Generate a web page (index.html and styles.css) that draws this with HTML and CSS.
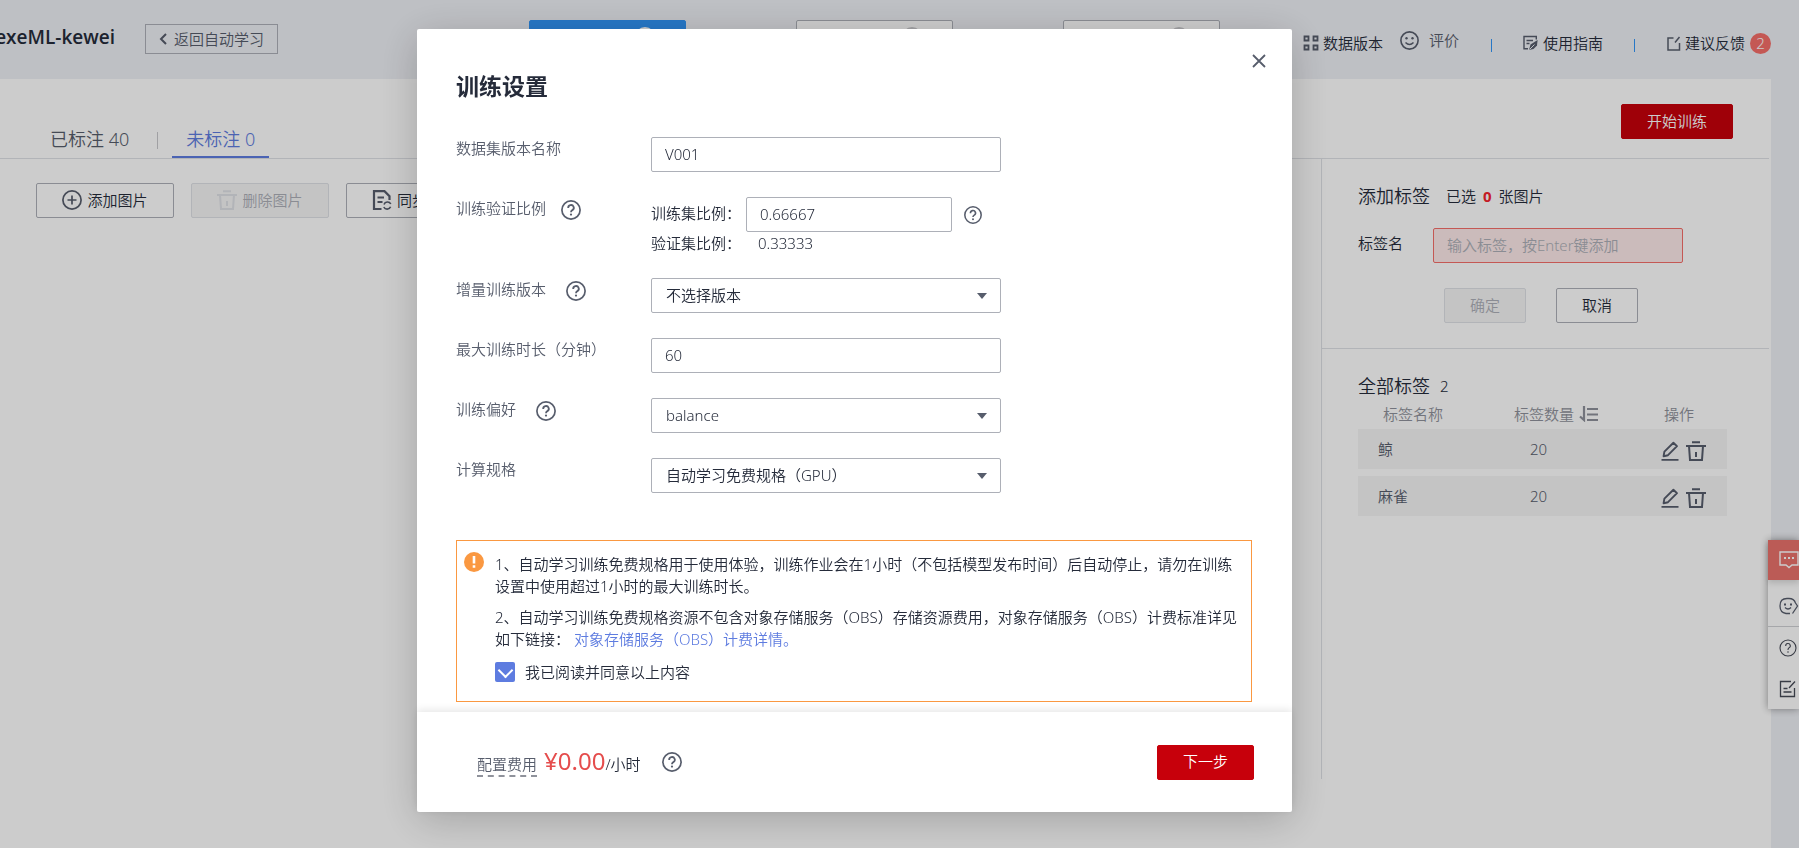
FILE: index.html
```html
<!DOCTYPE html>
<html lang="zh-CN">
<head>
<meta charset="utf-8">
<title>exeML-kewei</title>
<link rel="stylesheet" href="styles.css">
</head>
<body>
<svg class="defs" aria-hidden="true">
  <symbol id="help" viewBox="0 0 20 20">
    <circle cx="10" cy="10" r="9.1" fill="none" stroke="currentColor" stroke-width="1.7"/>
    <path d="M7.2 8A2.8 2.7 0 1 1 11.4 10.1C10.3 10.8 10 11.1 10 12.2" fill="none" stroke="currentColor" stroke-width="1.8"/>
    <circle cx="10" cy="14.6" r="1.1" fill="currentColor"/>
  </symbol>
  <symbol id="trash" viewBox="0 0 20 20">
    <path d="M6 1.2h8M0 5h20M3 5l1 14h12l1-14M10 11v5" fill="none" stroke="currentColor" stroke-width="2"/>
  </symbol>
  <symbol id="pencil" viewBox="0 0 18 20">
    <path d="M2.6 15.2L3.4 10.6L12.4 1.8L16 5.2L7 14.2Z M0.5 18.9h17" fill="none" stroke="currentColor" stroke-width="1.9" stroke-linejoin="round"/>
  </symbol>
</svg>

<header class="topbar">
  <h1 class="project">exeML-kewei</h1>
  <button class="back" type="button">
    <svg width="8" height="12" viewBox="0 0 8 12"><path d="M7 1L2 6l5 5" fill="none" stroke="currentColor" stroke-width="2"/></svg>返回自动学习
  </button>
  <div class="steps">
    <div class="step step-on"><span class="step-dot"></span></div>
    <div class="step"><span class="step-dot"></span></div>
    <div class="step"><span class="step-dot"></span></div>
  </div>
  <nav class="links">
    <a class="link" href="#versions">
      <svg width="16" height="16" viewBox="0 0 16 16"><path d="M1.5 1.5h4v4h-4zM10.5 1.5h4v4h-4zM1.5 10.5h4v4h-4zM10.5 10.5h4v4h-4z" fill="none" stroke="#575d6c" stroke-width="1.8"/></svg>数据版本
    </a>
    <a class="link rate" href="#rate">
      <svg width="19" height="19" viewBox="0 0 19 19"><circle cx="9.5" cy="9.5" r="8.6" fill="none" stroke="#575d6c" stroke-width="1.6"/><circle cx="6.5" cy="7.2" r="1.2" fill="#575d6c"/><circle cx="12.5" cy="7.2" r="1.2" fill="#575d6c"/><path d="M5.5 11.5Q9.5 15.5 13.5 11.5" fill="none" stroke="#575d6c" stroke-width="1.5"/></svg>评价
    </a>
    <span class="bar"></span>
    <a class="link guide" href="#guide">
      <svg width="15" height="16" viewBox="0 0 15 16" fill="none" stroke="#575d6c" stroke-width="1.4"><path d="M13.3 4.5V1.5H1v12.3h4M3.5 5.5h6.5M3.5 8.5h3"/><path d="M6 15L7.5 9.5L14.6 5L14 10.5L10.5 14Z" fill="#575d6c" stroke="none"/><path d="M6.5 14.5L11.5 9.5" stroke="#eef0f5" stroke-width="1"/></svg>使用指南
    </a>
    <span class="bar"></span>
    <a class="link feedback" href="#feedback">
      <svg width="14" height="15" viewBox="0 0 14 15" fill="none" stroke="#575d6c" stroke-width="1.5"><path d="M6.5 2H1v12h11.5V7M8 6.5L12.5 1"/></svg>建议反馈<span class="badge">2</span>
    </a>
  </nav>
</header>

<main class="panel">
  <div class="panel-head">
    <div class="tabs">
      <button class="tab" type="button">已标注 40</button>
      <span class="tab-sep"></span>
      <button class="tab tab-on" type="button">未标注 0</button>
    </div>
    <button class="btn primary start" type="button">开始训练</button>
  </div>
  <div class="panel-body">
    <div class="tools">
      <button class="btn tool" type="button">
        <svg width="20" height="20" viewBox="0 0 20 20" fill="none" stroke="#575d6c" stroke-width="1.7"><circle cx="10" cy="10" r="9.1"/><path d="M10 5.5v9M5.5 10h9"/></svg>添加图片
      </button>
      <button class="btn tool" type="button" disabled>
        <svg width="20" height="20"><use href="#trash"/></svg>删除图片
      </button>
      <button class="btn tool sync" type="button">
        <svg width="20" height="20" viewBox="0 0 20 20" fill="none" stroke="#575d6c" stroke-width="2.2"><path d="M9.5 19H2V1.2h10.5l5 5V10M5.5 7.5h6.5M5.5 12h5"/><path d="M18.8 14A3.7 3.7 0 0 0 12 14.5M11.8 17A3.7 3.7 0 0 0 18.6 16.8" stroke-width="1.6"/></svg>同步
      </button>
    </div>
    <aside class="side">
      <section class="add">
        <div class="add-title"><h2>添加标签</h2><span>已选 <b>0</b> 张图片</span></div>
        <div class="add-row">
          <label for="tag">标签名</label>
          <input id="tag" class="field tag" type="text" placeholder="输入标签，按Enter键添加">
        </div>
        <div class="add-actions">
          <button class="btn" type="button" disabled>确定</button>
          <button class="btn" type="button">取消</button>
        </div>
      </section>
      <section class="all">
        <div class="add-title"><h2>全部标签</h2><span class="count">2</span></div>
        <table class="tags">
          <thead>
            <tr><th>标签名称</th><th><span class="sort">标签数量<svg width="20" height="16" viewBox="0 0 20 16" fill="none" stroke="currentColor" stroke-width="2.2"><path d="M5 0v14L1 10.5M8 3h11M8 8.5h11M8 14h11"/></svg></span></th><th>操作</th></tr>
          </thead>
          <tbody>
            <tr><td>鲸</td><td>20</td><td><span class="ops"><button class="icon" type="button" aria-label="编辑"><svg width="18" height="20"><use href="#pencil"/></svg></button><button class="icon" type="button" aria-label="删除"><svg width="20" height="20"><use href="#trash"/></svg></button></span></td></tr>
            <tr><td>麻雀</td><td>20</td><td><span class="ops"><button class="icon" type="button" aria-label="编辑"><svg width="18" height="20"><use href="#pencil"/></svg></button><button class="icon" type="button" aria-label="删除"><svg width="20" height="20"><use href="#trash"/></svg></button></span></td></tr>
          </tbody>
        </table>
      </section>
    </aside>
  </div>
</main>

<div class="dock">
  <button class="dock-item dock-chat" type="button" aria-label="咨询">
    <svg width="20" height="18" viewBox="0 0 20 18" fill="none" stroke="#fff" stroke-width="1.4"><path d="M1 1h18v13h-6l-3 2.5l-3-2.5H1z"/><path d="M5 7h2M9 7h2M13 7h2" stroke-width="2"/></svg>
  </button>
  <button class="dock-item dock-smile" type="button" aria-label="评价">
    <svg width="20" height="18" viewBox="0 0 20 18" fill="none" stroke="#575d6c" stroke-width="1.3"><path d="M11 16.5H7Q1 15.5 1 9Q1 1.5 8 1.5H10Q15 1.5 16.5 6M13.5 16.5L18.5 9L16.5 6M6 10.5Q9 13.5 12 10.5"/><path d="M5 7.5h2M11 7.5h2" stroke-width="2"/></svg>
  </button>
  <button class="dock-item" type="button" aria-label="帮助">
    <svg width="18" height="18" viewBox="0 0 18 18" fill="none" stroke="#474b57" stroke-width="1.1"><circle cx="9" cy="9" r="8"/><path d="M6.7 7A2.3 2.3 0 1 1 9.8 9Q9 9.5 9 11M9 12.3v1.4"/></svg>
  </button>
  <button class="dock-item" type="button" aria-label="反馈">
    <svg width="18" height="18" viewBox="0 0 18 18" fill="none" stroke="#474b57" stroke-width="1.3"><path d="M12 1.5H1.5v15h14V8M16 1.5L10 8M4.5 8.5h4M4.5 12h8"/></svg>
  </button>
</div>

<div class="overlay">
  <div class="modal" role="dialog" aria-labelledby="dlg-title">
    <div class="modal-body">
      <button class="icon close" type="button" aria-label="关闭"><svg width="14" height="14" viewBox="0 0 14 14"><path d="M1 1l12 12M13 1L1 13" fill="none" stroke="currentColor" stroke-width="1.8"/></svg></button>
      <h2 class="modal-title" id="dlg-title">训练设置</h2>
      <form class="form">
        <div class="row">
          <div class="row-label"><label for="ver">数据集版本名称</label></div>
          <input id="ver" class="field" type="text" value="V001">
        </div>
        <div class="row">
          <div class="row-label near"><label for="ratio">训练验证比例</label><svg width="20" height="20"><use href="#help"/></svg></div>
          <div class="ratios">
            <div class="ratio"><span>训练集比例：</span><input id="ratio" class="field" type="text" value="0.66667"><svg width="18" height="18"><use href="#help"/></svg></div>
            <div class="ratio"><span>验证集比例：</span><output>0.33333</output></div>
          </div>
        </div>
        <div class="row">
          <div class="row-label"><label for="inc">增量训练版本</label><svg width="20" height="20"><use href="#help"/></svg></div>
          <div class="pick"><select id="inc" class="field"><option>不选择版本</option></select></div>
        </div>
        <div class="row">
          <div class="row-label"><label for="max">最大训练时长（分钟）</label></div>
          <input id="max" class="field" type="text" value="60">
        </div>
        <div class="row">
          <div class="row-label"><label for="pref">训练偏好</label><svg width="20" height="20"><use href="#help"/></svg></div>
          <div class="pick"><select id="pref" class="field"><option>balance</option></select></div>
        </div>
        <div class="row">
          <div class="row-label"><label for="spec">计算规格</label></div>
          <div class="pick"><select id="spec" class="field"><option>自动学习免费规格（GPU）</option></select></div>
        </div>
      </form>
      <div class="notice">
        <svg class="warn" width="20" height="20" viewBox="0 0 20 20"><circle cx="10" cy="10" r="10" fill="#fa9841"/><path d="M10 4v7.5M10 13.3v2.4" stroke="#fff" stroke-width="2.6"/></svg>
        <div class="notice-text">
          <p>1、自动学习训练免费规格用于使用体验，训练作业会在1小时（不包括模型发布时间）后自动停止，请勿在训练设置中使用超过1小时的最大训练时长。</p>
          <p>2、自动学习训练免费规格资源不包含对象存储服务（OBS）存储资源费用，对象存储服务（OBS）计费标准详见如下链接： <a href="#obs">对象存储服务（OBS）计费详情。</a></p>
          <label class="agree"><input type="checkbox" checked>我已阅读并同意以上内容</label>
        </div>
      </div>
    </div>
    <footer class="modal-foot">
      <span class="fee">配置费用</span>
      <span class="cost"><strong>¥0.00</strong>/小时</span>
      <svg class="fee-help" width="20" height="20"><use href="#help"/></svg>
      <button class="btn primary next" type="button">下一步</button>
    </footer>
  </div>
</div>
</body>
</html>
```

FILE: styles.css
```css
* { box-sizing: border-box; }
body {
  margin: 0;
  min-height: 100vh;
  display: flex;
  flex-direction: column;
  overflow: hidden;
  background: #eef0f5;
  color: #252b3a;
  font: 350 15px/22px "Noto Sans", "Noto Sans CJK SC", sans-serif;
}
h1, h2, p { margin: 0; }
button, input, select { font: inherit; color: inherit; }
button { padding: 0; border: 0; background: none; white-space: nowrap; }
svg { flex: none; display: block; }
.defs { position: absolute; width: 0; height: 0; }

/* Top bar */
.topbar {
  display: flex;
  align-items: flex-start;
  height: 79px;
  padding-right: 28px;
}
.project {
  display: flex;
  justify-content: flex-end;
  width: 115px;
  padding-top: 23px;
  font-family: "Open Sans", sans-serif;
  font-size: 19px;
  line-height: 28px;
  font-weight: 600;
  white-space: nowrap;
}
.back {
  display: flex;
  align-items: center;
  justify-content: center;
  gap: 7px;
  width: 133px;
  height: 30px;
  margin: 24px 0 0 30px;
  border: 1px solid #adb0b8;
  color: #575d6c;
}
.steps {
  display: flex;
  gap: 110px;
  margin: 20px 0 0 251px;
}
.step {
  display: flex;
  justify-content: flex-end;
  width: 157px;
  height: 36px;
  padding: 6px 30px 0 0;
  border: 1px solid #adb0b8;
  border-radius: 2px;
  background: #fff;
}
.step-on { border-color: #3195f8; background: #3195f8; }
.step-dot { width: 20px; height: 20px; border-radius: 50%; background: #c8c9cc; }
.step-on .step-dot { background: #fff; }
.links { display: flex; align-items: center; margin-left: auto; padding-top: 29px; }
.link { display: flex; align-items: center; gap: 4px; color: #252b3a; text-decoration: none; }
.rate { gap: 10px; margin: 0 32px 6px 17px; color: #575d6c; }
.guide { gap: 5px; margin: 0 31px; }
.feedback { margin-left: 32px; }
.bar { width: 1px; height: 13px; background: #3195f8; margin-top: 4px; }
.badge {
  width: 21px;
  height: 21px;
  margin-left: 1px;
  border-radius: 50%;
  background: #f66f6a;
  color: #fff;
  line-height: 21px;
  text-align: center;
}

/* Panel */
.panel { flex: 1; margin-right: 28px; background: #fff; }
.panel-head {
  display: flex;
  justify-content: space-between;
  height: 80px;
  margin-right: 2px;
  border-bottom: 1px solid #dfe1e6;
}
.tabs { display: flex; align-items: flex-end; padding-left: 36px; }
.tab { height: 35px; padding: 0 14px 2px; border-bottom: 2px solid transparent; font-size: 18px; color: #575d6c; }
.tab-on { border-color: #5e7ce0; color: #5e7ce0; }
.tab-sep { width: 1px; height: 17px; margin: 0 14px 9px; background: #c8c9cc; }
.btn {
  display: flex;
  align-items: center;
  justify-content: center;
  gap: 5px;
  height: 35px;
  padding-bottom: 2px;
  border: 1px solid #adb0b8;
  border-radius: 2px;
  background: #fff;
}
.btn:disabled { border-color: #dfe1e6; background: #f5f5f6; color: #adb0b8; }
.btn:disabled svg { color: #dfe1e6; }
.primary { border-color: #c7000b; background: #c7000b; color: #fff; }
.start { width: 112px; margin: 25px 36px 0 0; }
.panel-body { display: flex; margin-right: 2px; }
.tools { flex: 1; display: flex; align-items: flex-start; gap: 17px; padding: 24px 0 0 36px; }
.tool { width: 138px; }
.sync { width: 152px; justify-content: flex-start; padding-left: 25px; }

.side { width: 448px; min-height: calc(100vh - 228px); border-left: 1px solid #dfe1e6; }
.add { height: 190px; padding: 25px 36px 0; border-bottom: 1px solid #dfe1e6; }
.add-title { display: flex; align-items: center; gap: 16px; height: 24px; }
.add-title h2 { font-size: 18px; font-weight: 350; }
.add-title b { margin: 0 3px; font-weight: 700; color: #f5222d; }
.add-row { display: flex; gap: 30px; margin-top: 20px; }
.add-row label { padding-top: 4px; white-space: nowrap; }
.add-actions { display: flex; gap: 30px; margin: 25px 0 0 86px; }
.add-actions .btn { width: 82px; }
.all { padding: 25px 42px 0 36px; }
.count { margin-left: -6px; }
.tags { width: 100%; margin-top: 1px; border-spacing: 0 7px; table-layout: fixed; }
.tags th { height: 14px; padding: 0 0 0 25px; font-weight: 350; line-height: 14px; color: #8f929b; text-align: left; }
.tags th:first-child { width: 136px; }
.tags th:nth-child(2) { width: 145px; padding-left: 20px; }
.tags td { height: 40px; padding: 0 0 0 20px; background: #f5f5f6; color: #575d6c; }
.tags td:nth-child(2) { padding-left: 36px; }
.tags td:nth-child(3) { padding: 4px 0 0 22px; }
.sort { display: flex; align-items: center; gap: 5px; }
.ops { display: flex; gap: 7px; }
.icon { color: #575d6c; }

/* Dock on the window's right edge */
.dock {
  position: fixed;
  right: 0;
  top: 540px;
  width: 31px;
  background: #fff;
  box-shadow: 0 0 8px rgba(0, 0, 0, 0.4);
}
.dock-item { display: flex; align-items: center; width: 100%; height: 41px; padding-left: 11px; }
.dock-chat { height: 40px; margin-bottom: 6px; background: #ea726c; box-shadow: 0 3px 6px rgba(0, 0, 0, 0.15); }
.dock-smile { border-bottom: 1px solid #d0d1d5; }

/* Dialog */
.overlay {
  position: fixed;
  inset: 0;
  display: flex;
  justify-content: center;
  align-items: flex-start;
  padding: 29px 90px 0 0;
  background: rgba(0, 0, 0, 0.2);
}
.modal {
  width: 875px;
  border-radius: 2px;
  background: #fff;
  box-shadow: 0 8px 40px rgba(0, 0, 0, 0.2);
}
.modal-body { position: relative; padding: 39px 40px 10px 39px; }
.close { position: absolute; top: 25px; right: 26px; }
.modal-title { margin-bottom: 33px; font-size: 23px; line-height: 36px; font-weight: 600; }
.form { display: flex; flex-direction: column; gap: 25px; }
.row { display: flex; align-items: flex-start; }
.row-label { display: flex; align-items: center; gap: 20px; width: 195px; height: 26px; color: #575d6c; }
.row-label label { padding-bottom: 4px; }
.near { gap: 15px; }
.field {
  display: block;
  width: 350px;
  height: 35px;
  padding: 0 13px 2px;
  border: 1px solid #adb0b8;
  border-radius: 2px;
  background: #fff;
  outline: 0;
}
.tag { width: 250px; border-color: #f66f6a; background: #feeaea; }
.tag::placeholder { color: #adb0b8; opacity: 1; }
.pick { display: flex; align-items: center; }
.pick .field { appearance: none; padding: 0 14px 2px; }
.pick::after {
  content: "";
  width: 0;
  margin-left: -24px;
  border: 5px solid transparent;
  border-top: 6px solid #575d6c;
  border-bottom: 0;
  pointer-events: none;
}
.ratio { display: flex; align-items: center; }
.ratio span { width: 95px; padding-bottom: 4px; }
.ratio .field { width: 206px; margin-right: 12px; }
.ratio svg { color: #575d6c; }
.ratio output { padding: 0 0 4px 12px; }
.ratios { margin-bottom: -5px; }
.notice {
  display: flex;
  gap: 11px;
  margin-top: 47px;
  padding: 11px 6px 18px 7px;
  border: 1px solid #fa9841;
}
.notice p { margin-bottom: 9px; line-height: 22px; }
.notice-text { flex: 1; padding-top: 1px; }
.notice a { color: #5e7ce0; text-decoration: none; }
.agree { display: flex; align-items: center; gap: 10px; margin-top: 11px; }
.agree input {
  display: flex;
  justify-content: center;
  width: 20px;
  height: 20px;
  margin: 0;
  padding-top: 4px;
  appearance: none;
  border-radius: 2px;
  background: #5e7ce0;
}
.agree input:checked::after {
  content: "";
  width: 9px;
  height: 9px;
  margin-top: -1px;
  border: solid #fff;
  border-width: 0 2px 2px 0;
  transform: rotate(45deg);
}
.modal-foot {
  display: flex;
  align-items: center;
  height: 100px;
  padding: 0 38px 0 60px;
  box-shadow: 0 -2px 8px rgba(0, 0, 0, 0.1);
}
.fee { margin-top: 6px; border-bottom: 2px dashed #8f929b; color: #575d6c; }
.cost { margin-left: 7px; line-height: 32px; }
.cost strong { font-size: 24px; font-weight: 400; color: #e54d4d; }
.fee-help { margin-left: 21px; }
.row-label svg, .fee-help { color: #575d6c; }
.next { width: 97px; margin-left: auto; }
```
